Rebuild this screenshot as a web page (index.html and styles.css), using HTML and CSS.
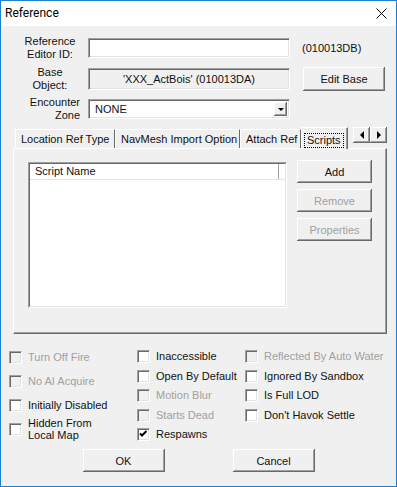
FILE: index.html
```html
<!DOCTYPE html>
<html lang="en">
<head>
    <meta charset="UTF-8">
    <title>Reference</title>
    <link rel="stylesheet" href="styles.css">
</head>
<body>
    <div class="window">
        <div class="titlebar">
            <span class="title">Reference</span>
            <svg class="close" width="11" height="11" viewBox="0 0 11 11">
                <path d="M0.5 0.5 L10.5 10.5 M10.5 0.5 L0.5 10.5" stroke="#000" stroke-width="1"/>
            </svg>
        </div>
        <div class="content">
            <!-- Top fields -->
            <div class="row">
                <div class="label">Reference<br>Editor ID:</div>
                <div class="field"></div>
                <div class="formid">(010013DB)</div>
            </div>
            <div class="row row-base">
                <div class="label">Base<br>Object:</div>
                <div class="field field-static">'XXX_ActBois' (010013DA)</div>
                <button type="button" class="btn btn-edit">Edit Base</button>
            </div>
            <div class="row row-zone">
                <div class="label label-right">Encounter<br>Zone</div>
                <div class="field combo">
                    <span class="combo-text">NONE</span>
                    <span class="combo-arrow"><span class="tri-down"></span></span>
                </div>
            </div>

            <!-- Tabs -->
            <div class="tabs">
                <div class="tab tab-loc">Location Ref Type</div>
                <div class="tab tab-nav">NavMesh Import Option</div>
                <div class="tab tab-attach">Attach Ref</div>
                <div class="tab tab-active"><span class="focus">Scripts</span></div>
                <div class="tab-scroll">
                    <span class="scroll-btn"><span class="tri-left"></span></span>
                    <span class="scroll-btn"><span class="tri-right"></span></span>
                </div>
            </div>
            <div class="panel">
                <div class="list">
                    <div class="list-inner">
                        <div class="list-header">
                            <div class="header-cell">Script Name</div>
                        </div>
                    </div>
                </div>
                <div class="side-buttons">
                    <button type="button" class="btn btn-side">Add</button>
                    <button type="button" class="btn btn-side disabled">Remove</button>
                    <button type="button" class="btn btn-side disabled">Properties</button>
                </div>
            </div>

            <!-- Flags -->
            <div class="checks">
                <div class="col col-first">
                    <div class="check disabled"><span class="box"></span>Turn Off Fire</div>
                    <div class="check disabled"><span class="box"></span>No AI Acquire</div>
                    <div class="check"><span class="box"></span>Initially Disabled</div>
                    <div class="check two-line"><span class="box"></span><span>Hidden From<br>Local Map</span></div>
                </div>
                <div class="col col-rest">
                    <div class="check"><span class="box"></span>Inaccessible</div>
                    <div class="check"><span class="box"></span>Open By Default</div>
                    <div class="check disabled"><span class="box"></span>Motion Blur</div>
                    <div class="check disabled"><span class="box"></span>Starts Dead</div>
                    <div class="check">
                        <span class="box">
                            <svg width="9" height="9" viewBox="0 0 9 9">
                                <path d="M1 3.5 L3 5.5 L7.5 1" fill="none" stroke="#000" stroke-width="2"/>
                            </svg>
                        </span>Respawns
                    </div>
                </div>
                <div class="col col-rest">
                    <div class="check disabled"><span class="box"></span>Reflected By Auto Water</div>
                    <div class="check"><span class="box"></span>Ignored By Sandbox</div>
                    <div class="check"><span class="box"></span>Is Full LOD</div>
                    <div class="check"><span class="box"></span>Don't Havok Settle</div>
                </div>
            </div>

            <div class="actions">
                <button type="button" class="btn btn-main">OK</button>
                <button type="button" class="btn btn-main">Cancel</button>
            </div>
        </div>
    </div>
</body>
</html>
```

FILE: styles.css
```css
body {
    margin: 0;
    padding: 0;
    background-color: #f0f0f0;
}
.window {
    width: 397px;
    height: 487px;
    box-sizing: border-box;
    border: 1px solid #1c7fd6;
    background-color: #f0f0f0;
    font-family: 'Liberation Sans', Arial, sans-serif;
    font-size: 11px;
    line-height: 13px;
    color: #111;
}
.titlebar {
    height: 25px;
    background-color: #fff;
    display: flex;
    align-items: center;
    justify-content: space-between;
    padding: 0 9px 0 4px;
}
.title {
    font-family: 'Roboto', 'Noto Sans', sans-serif;
    font-size: 12px;
    color: #000;
}
.content {
    padding-top: 9px;
}
/* Top fields */
.row {
    display: flex;
    align-items: center;
    height: 26px;
}
.row-base {
    margin-top: 5px;
}
.row-zone {
    margin-top: 4px;
}
.label {
    width: 76px;
    margin-left: 11px;
    text-align: center;
}
.label-right {
    text-align: right;
    width: 68px;
    padding-right: 8px;
}
.field {
    width: 202px;
    height: 20px;
    box-sizing: border-box;
    background-color: #fff;
    border: 1px solid;
    border-color: #a0a0a0 #fff #fff #a0a0a0;
    box-shadow: inset 1px 1px #696969, inset -1px -1px #e3e3e3;
}
.field-static {
    height: 22px;
    background-color: #f0f0f0;
    text-align: center;
    line-height: 20px;
}
.formid {
    margin-left: 12px;
}
.combo {
    display: flex;
    align-items: center;
    padding: 2px;
}
.combo-text {
    flex: 1;
    padding-left: 4px;
}
.combo-arrow {
    width: 13px;
    height: 14px;
    box-sizing: border-box;
    display: flex;
    align-items: center;
    justify-content: center;
    background-color: #f0f0f0;
    box-shadow: inset -1px -1px #696969, inset 1px 1px #fff, inset -2px -2px #a0a0a0;
}
.tri-down {
    width: 0;
    height: 0;
    border-left: 3px solid transparent;
    border-right: 3px solid transparent;
    border-top: 3px solid #000;
}
.btn {
    font-family: 'Liberation Sans', Arial, sans-serif;
    font-size: 11px;
    color: #111;
    background-color: #f0f0f0;
    border: none;
    padding: 0;
    box-shadow: inset -1px -1px #696969, inset 1px 1px #fff, inset -2px -2px #a0a0a0;
}
.btn-edit {
    margin-left: 13px;
    width: 82px;
    height: 24px;
}
.btn.disabled {
    color: #a0a0a0;
}
/* Tabs */
.tabs {
    display: flex;
    align-items: flex-end;
    margin: 5px 0 0 12px;
    width: 374px;
    height: 21px;
}
.tab {
    height: 19px;
    box-sizing: border-box;
    line-height: 18px;
    padding-left: 5px;
    white-space: nowrap;
    overflow: hidden;
    border-left: 1px solid #fff;
    border-top: 1px solid #fff;
    border-right: 1px solid #696969;
}
.tab-loc {
    margin-left: 2px;
    width: 100px;
}
.tab-nav {
    width: 125px;
}
.tab-attach {
    width: 61px;
}
.tab-active {
    position: relative;
    z-index: 1;
    width: 47px;
    height: 22px;
    margin-bottom: -1px;
    padding: 3px 0 0 2px;
    background-color: #f0f0f0;
    box-shadow: inset -1px 0 #a0a0a0;
}
.focus {
    display: inline-block;
    border: 1px dotted #000;
    padding: 0 2px;
    line-height: 13px;
}
.tab-scroll {
    display: flex;
    margin-left: auto;
    align-self: flex-start;
}
.scroll-btn {
    width: 17px;
    height: 16px;
    display: flex;
    align-items: center;
    justify-content: center;
    box-shadow: inset -1px -1px #696969, inset 1px 1px #fff, inset -2px -2px #a0a0a0;
}
.tri-left {
    width: 0;
    height: 0;
    border-top: 4px solid transparent;
    border-bottom: 4px solid transparent;
    border-right: 4px solid #000;
}
.tri-right {
    width: 0;
    height: 0;
    border-top: 4px solid transparent;
    border-bottom: 4px solid transparent;
    border-left: 4px solid #000;
}
.panel {
    display: flex;
    align-items: flex-start;
    margin-left: 12px;
    width: 374px;
    height: 186px;
    box-sizing: border-box;
    padding: 13px 0 0 14px;
    border: 1px solid;
    border-color: #fff #696969 #696969 #fff;
    box-shadow: inset -1px -1px #a0a0a0;
}
.list {
    width: 259px;
    height: 146px;
    box-sizing: border-box;
    border: 1px solid;
    border-color: #a0a0a0 #fff #fff #a0a0a0;
}
.list-inner {
    height: 100%;
    box-sizing: border-box;
    background-color: #fff;
    border: 1px solid;
    border-color: #696969 #e3e3e3 #e3e3e3 #696969;
}
.list-header {
    height: 15px;
    border-bottom: 1px solid #e3e3e3;
}
.header-cell {
    width: 249px;
    height: 15px;
    box-sizing: border-box;
    padding-left: 5px;
    line-height: 15px;
    border-right: 1px solid #a0a0a0;
}
.side-buttons {
    display: flex;
    flex-direction: column;
    gap: 6px;
    margin: -2px 0 0 10px;
}
.btn-side {
    width: 75px;
    height: 23px;
}
/* Flags */
.checks {
    display: grid;
    grid-template-columns: 128px 108px 1fr;
    margin: 11px 0 0 8px;
    height: 104px;
}
.col {
    display: flex;
    flex-direction: column;
}
.col-rest {
    padding-top: 2px;
}
.check {
    display: flex;
    align-items: center;
    height: 19.5px;
    white-space: nowrap;
}
.col-first .check {
    height: 24px;
}
.two-line {
    line-height: 12px;
}
.check.disabled {
    color: #a0a0a0;
}
.box {
    width: 13px;
    height: 13px;
    box-sizing: border-box;
    flex-shrink: 0;
    margin-right: 6px;
    display: flex;
    align-items: center;
    justify-content: center;
    background-color: #fff;
    border: 1px solid;
    border-color: #a0a0a0 #fff #fff #a0a0a0;
    box-shadow: inset 1px 1px #696969, inset -1px -1px #e3e3e3;
}
.check.disabled .box {
    background-color: #f0f0f0;
}
.actions {
    display: flex;
    justify-content: center;
    gap: 68px;
}
.btn-main {
    width: 82px;
    height: 23px;
}
```
